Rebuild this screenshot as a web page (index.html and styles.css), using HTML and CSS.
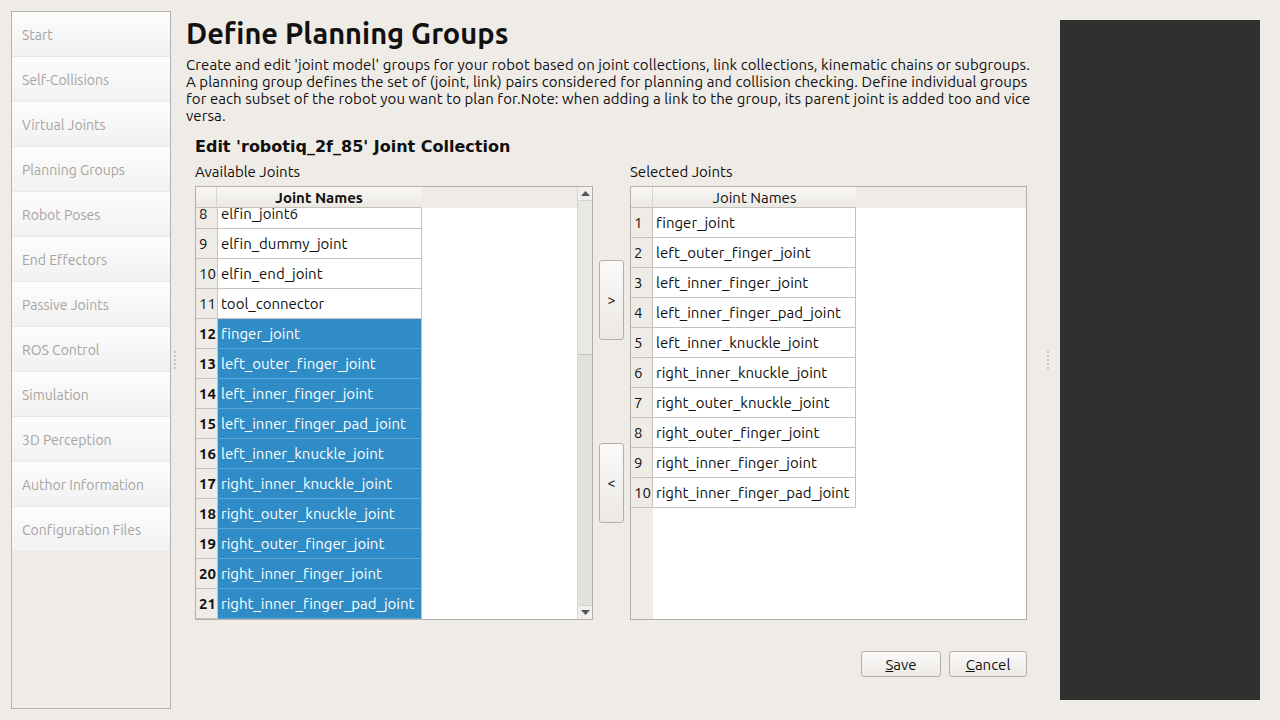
FILE: index.html
```html
<!DOCTYPE html>
<html>
<head>
<meta charset="utf-8">
<link rel="stylesheet" href="styles.css">
</head>
<body>
<div class="app">
  <nav class="sidebar">
    <div class="nav-item">Start</div>
    <div class="nav-item">Self-Collisions</div>
    <div class="nav-item">Virtual Joints</div>
    <div class="nav-item">Planning Groups</div>
    <div class="nav-item">Robot Poses</div>
    <div class="nav-item">End Effectors</div>
    <div class="nav-item">Passive Joints</div>
    <div class="nav-item">ROS Control</div>
    <div class="nav-item">Simulation</div>
    <div class="nav-item">3D Perception</div>
    <div class="nav-item">Author Information</div>
    <div class="nav-item">Configuration Files</div>
  </nav>
  <div class="splitter left"><div class="grip"><i></i><i></i><i></i><i></i><i></i></div></div>
  <main class="main">
    <h1 class="title">Define Planning Groups</h1>
    <p class="desc">Create and edit 'joint model' groups for your robot based on joint collections, link collections, kinematic chains or subgroups.<br>A planning group defines the set of (joint, link) pairs considered for planning and collision checking. Define individual groups<br>for each subset of the robot you want to plan for.Note: when adding a link to the group, its parent joint is added too and vice<br>versa.</p>
    <section class="editor">
      <h2 class="subtitle">Edit 'robotiq_2f_85' Joint Collection</h2>
      <div class="lists">
        <div class="list-col">
          <div class="list-label">Available Joints</div>
          <div class="table left-table">
            <div class="viewport">
              <div class="thead"><div class="corner"></div><div class="th bold">Joint Names</div><div class="th-rest"></div></div>
              <div class="tbody">
                <div class="row first"><div class="num">8</div><div class="name">elfin_joint6</div></div>
                <div class="row"><div class="num">9</div><div class="name">elfin_dummy_joint</div></div>
                <div class="row"><div class="num">10</div><div class="name">elfin_end_joint</div></div>
                <div class="row"><div class="num">11</div><div class="name">tool_connector</div></div>
                <div class="row sel"><div class="num">12</div><div class="name">finger_joint</div></div>
                <div class="row sel"><div class="num">13</div><div class="name">left_outer_finger_joint</div></div>
                <div class="row sel"><div class="num">14</div><div class="name">left_inner_finger_joint</div></div>
                <div class="row sel"><div class="num">15</div><div class="name">left_inner_finger_pad_joint</div></div>
                <div class="row sel"><div class="num">16</div><div class="name">left_inner_knuckle_joint</div></div>
                <div class="row sel"><div class="num">17</div><div class="name">right_inner_knuckle_joint</div></div>
                <div class="row sel"><div class="num">18</div><div class="name">right_outer_knuckle_joint</div></div>
                <div class="row sel"><div class="num">19</div><div class="name">right_outer_finger_joint</div></div>
                <div class="row sel"><div class="num">20</div><div class="name">right_inner_finger_joint</div></div>
                <div class="row sel"><div class="num">21</div><div class="name">right_inner_finger_pad_joint</div></div>
              </div>
            </div>
            <div class="scrollbar">
              <div class="sb-btn"><svg width="9" height="5" viewBox="0 0 9 5"><path d="M0 5 L4.5 0 L9 5 Z" fill="#555"/></svg></div>
              <div class="sb-track"><div class="sb-handle"></div></div>
              <div class="sb-btn"><svg width="9" height="5" viewBox="0 0 9 5"><path d="M0 0 L4.5 5 L9 0 Z" fill="#555"/></svg></div>
            </div>
          </div>
        </div>
        <div class="move-col">
          <button class="move-btn add">&gt;</button>
          <button class="move-btn remove">&lt;</button>
        </div>
        <div class="list-col">
          <div class="list-label">Selected Joints</div>
          <div class="table right-table">
            <div class="viewport">
              <div class="thead"><div class="corner"></div><div class="th">Joint Names</div><div class="th-rest"></div></div>
              <div class="tbody">
                <div class="row"><div class="num">1</div><div class="name">finger_joint</div></div>
                <div class="row"><div class="num">2</div><div class="name">left_outer_finger_joint</div></div>
                <div class="row"><div class="num">3</div><div class="name">left_inner_finger_joint</div></div>
                <div class="row"><div class="num">4</div><div class="name">left_inner_finger_pad_joint</div></div>
                <div class="row"><div class="num">5</div><div class="name">left_inner_knuckle_joint</div></div>
                <div class="row"><div class="num">6</div><div class="name">right_inner_knuckle_joint</div></div>
                <div class="row"><div class="num">7</div><div class="name">right_outer_knuckle_joint</div></div>
                <div class="row"><div class="num">8</div><div class="name">right_outer_finger_joint</div></div>
                <div class="row"><div class="num">9</div><div class="name">right_inner_finger_joint</div></div>
                <div class="row"><div class="num">10</div><div class="name">right_inner_finger_pad_joint</div></div>
              </div>
            </div>
          </div>
        </div>
      </div>
      <div class="actions">
        <button class="btn"><u>S</u>ave</button>
        <button class="btn"><u>C</u>ancel</button>
      </div>
    </section>
  </main>
  <div class="splitter right"><div class="grip"><i></i><i></i><i></i><i></i><i></i></div></div>
  <div class="viewer"></div>
</div>
</body>
</html>
```
FILE: styles.css
```css
* { box-sizing: border-box; }
html, body { margin: 0; padding: 0; }
body {
  background: #efebe7;
  font-family: "Ubuntu", "Open Sans", "Noto Sans", sans-serif;
  font-size: 15px;
  font-variant-ligatures: none;
  color: #101010;
  width: 1280px;
  height: 720px;
  overflow: hidden;
}
button { font-variant-ligatures: none; }
.app { display: flex; height: 720px; }

.sidebar {
  margin: 11px 0 11px 11px;
  width: 160px;
  height: 698px;
  border: 1px solid #b6b2ae;
  display: flex;
  flex-direction: column;
  flex: none;
  font-size: 14px;
}
.nav-item {
  height: 45px;
  line-height: 46px;
  padding-left: 10px;
  color: #a7a4a1;
  background: linear-gradient(#fdfdfd, #f1f1f1);
  border-bottom: 1px solid #e9e8e6;
  white-space: nowrap;
}

.splitter {
  width: 15px;
  flex: none;
  display: flex;
  align-items: center;
}
.splitter.left { padding-left: 3px; }
.splitter.right { width: 25px; justify-content: center; }
.grip { display: flex; flex-direction: column; gap: 2px; }
.grip i { display: block; width: 2px; height: 2px; background: #c9c6c2; }

.main { width: 849px; flex: none; padding-top: 16px; }
.title {
  margin: 0;
  font-size: 29px;
  font-weight: bold;
  line-height: 34px;
  color: #111;
}
.desc {
  margin: 6px 0 0;
  line-height: 17px;
  white-space: nowrap;
  letter-spacing: 0.08px;
}
.editor { padding-left: 9px; width: 841px; }
.subtitle {
  margin: 13px 0 0;
  font-family: "DejaVu Sans", sans-serif;
  font-size: 16px;
  font-weight: bold;
  line-height: 20px;
}
.lists { display: flex; margin-top: 6px; }
.list-col { display: flex; flex-direction: column; }
.list-label { height: 18px; line-height: 18px; margin-bottom: 5px; }

.table {
  height: 434px;
  border: 1px solid #b3afab;
  background: #fff;
  display: flex;
}
.left-table { width: 398px; }
.right-table { width: 397px; }
.viewport { flex: 1; overflow: hidden; display: flex; flex-direction: column; }
.right-table .viewport { background: linear-gradient(to right, #efebe7 22px, #fff 22px); }
.thead { display: flex; height: 21px; flex: none; background: #efebe7; }
.corner { width: 21px; background: linear-gradient(#f8f7f5, #ece9e5); border-right: 1px solid #d7d3cf; border-bottom: 1px solid #c6c2be; }
.right-table .corner { width: 22px; }
.th {
  width: 204px;
  text-align: center;
  line-height: 21px;
  background: linear-gradient(#f8f7f5, #ece9e5);
  border-bottom: 1px solid #c6c2be;
}
.th.bold { font-weight: bold; }
.right-table .th { width: 203px; }
.th-rest { flex: 1; }
.tbody { flex: 1; overflow: hidden; }
.row { display: flex; height: 30px; }
.row.first { margin-top: -9px; }
.num {
  width: 22px;
  background: #efebe7;
  border-right: 1px solid #c6c2be;
  border-bottom: 1px solid #c6c2be;
  padding-left: 3px;
  line-height: 30px;
}
.name {
  width: 204px;
  background: #fff;
  border-right: 1px solid #c6c2be;
  border-bottom: 1px solid #c6c2be;
  padding-left: 3px;
  line-height: 30px;
  white-space: nowrap;
}
.right-table .name { width: 203px; }
.row.sel .num { font-weight: bold; }
.row.sel .name { background: #308cc6; color: #fff; border-bottom-color: #5ea6d4; }

.scrollbar { width: 15px; flex: none; display: flex; flex-direction: column; border-left: 1px solid #d8d5d1; background: #e3e1de; }
.sb-btn { height: 14px; display: flex; align-items: center; justify-content: center; background: #f1f0ee; border-bottom: 1px solid #d6d3cf; }
.sb-btn:last-child { border-bottom: none; border-top: 1px solid #d6d3cf; }
.sb-track { flex: 1; }
.sb-handle { height: 154px; background: #eae8e5; border-bottom: 1px solid #c4c0bc; }

.move-col { width: 37px; display: flex; flex-direction: column; padding-top: 97px; padding-left: 6px; }
.move-btn {
  width: 25px;
  height: 80px;
  border: 1px solid #b3afab;
  border-radius: 3px;
  background: linear-gradient(#fbfaf9, #ebe8e5);
  font-family: inherit;
  font-size: 14px;
  color: #111;
  padding: 0;
}
.move-btn.remove { margin-top: 103px; }

.actions { display: flex; justify-content: flex-end; gap: 8px; margin-top: 31px; width: 832px; }
.btn {
  height: 26px;
  width: 80px;
  border: 1px solid #b3afab;
  border-radius: 3px;
  background: linear-gradient(#fbfaf9, #ece9e6);
  font-family: inherit;
  font-size: 15px;
  color: #111;
  padding: 0;
}
.btn:last-child { width: 78px; }

.viewer { width: 200px; height: 680px; margin-top: 20px; background: #303030; flex: none; }
```
